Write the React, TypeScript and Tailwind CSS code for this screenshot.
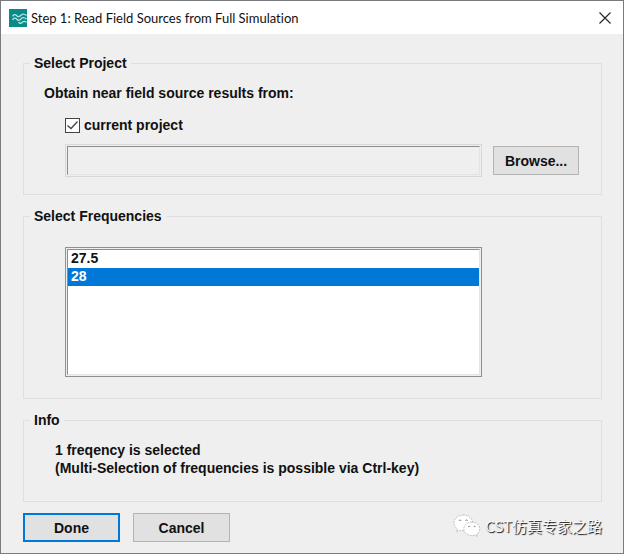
import { useState } from 'react';
import type { ReactNode } from 'react';

const frequencies = ['27.5', '28'];

const AppIcon = () => (
  <svg className="w-[18px] h-[18px] shrink-0" viewBox="0 0 18 18" fill="none" aria-hidden="true">
    <rect width="18" height="18" fill="#098c88" />
    <g stroke="#b9e0de" strokeWidth="1.3">
      <path d="M3.500 7.300c1.300-2.200 2.900-2.200 4.300-.6s2.800 1.200 4.200-.4 3.200-1.700 5.500.2" />
      <path d="M3.500 10.900c1.300-2.200 2.900-2.200 4.300-.6s2.800 1.200 4.200-.4 3.200-1.700 5.500.2" />
      <path d="M9.500 13.300c1.300 1.500 2.600 1.300 3.800 0s2.700-1.400 4.200.1" />
    </g>
  </svg>
);

const ChatIcon = () => (
  <svg className="w-[28px] h-[24px] shrink-0" viewBox="0 0 28 24" aria-hidden="true">
    <g fill="#fff" stroke="#9a9a9a" strokeWidth="0.6" strokeDasharray="2 1">
      <path d="M10.500 1C5.200 1 1 4.500 1 9c0 2.500 1.300 4.700 3.400 6.100l-.9 2.900 3.300-1.700c1.200.3 2.400.5 3.700.5 5.200 0 9.300-3.400 9.300-7.800S15.700 1 10.500 1z" />
      <path d="M18.800 8c-4.400 0-8 3-8 6.800s3.600 6.800 8 6.800c1 0 2-.2 2.900-.5l2.700 1.500-.7-2.400c1.900-1.200 3.100-3.200 3.100-5.400 0-3.800-3.600-6.800-8-6.800z" />
    </g>
    <g fill="none" stroke="#666" strokeWidth="0.9">
      <path d="M6 6.700c.3-1 1.700-1 2 0M12.500 6.700c.3-1 1.700-1 2 0" />
      <path d="M15.200 13c.3-.9 1.500-.9 1.800 0M20.700 13c.3-.9 1.500-.9 1.800 0" />
    </g>
  </svg>
);

const Group = ({ title, className, children }: { title: string; className: string; children: ReactNode }) => (
  <fieldset className="min-w-0 border border-[#dfdfdf]">
    <legend className="ml-[6px] px-1 leading-5">{title}</legend>
    <div className={className}>{children}</div>
  </fieldset>
);

const App = () => {
  const [useCurrent, setUseCurrent] = useState(true);
  const [selected, setSelected] = useState<string[]>(['28']);

  return (
    <div className="flex flex-col min-h-screen border border-[#7b7b7d] bg-[#efefef] text-[#111] text-[14px] leading-[18px] font-bold font-['Liberation_Sans',sans-serif]">
      <header className="flex items-center h-[33px] pl-2 pr-3 gap-1 bg-white font-normal text-[13px] font-['Lato',sans-serif] [font-variant-ligatures:none]">
        <AppIcon />
        <h1 className="flex-1">Step 1: Read Field Sources from Full Simulation</h1>
        <button type="button" aria-label="Close">
          <svg className="w-3 h-3" viewBox="0 0 12 12" fill="none" stroke="#222" strokeWidth="1.100">
            <path d="M.5.5l11 11M11.500.5l-11 11" />
          </svg>
        </button>
      </header>

      <main className="flex flex-col gap-[11px] pl-[22px] pr-[21px] pt-[19px] pb-[11px]">
        <Group title="Select Project" className="pl-5 pr-[22px] pt-[11px] pb-[17px]">
          <p>Obtain near field source results from:</p>
          <div className="mt-[14px] pl-[21px]">
            <label className="flex items-center gap-1 w-fit">
              <span className="grid">
                <input
                  type="checkbox"
                  checked={useCurrent}
                  onChange={e => setUseCurrent(e.target.checked)}
                  className="peer col-start-1 row-start-1 appearance-none w-[15px] h-[15px] border border-[#444] bg-white"
                />
                <svg
                  className="col-start-1 row-start-1 w-[15px] h-[15px] pointer-events-none invisible peer-checked:visible"
                  viewBox="0 0 15 15"
                  fill="none"
                  stroke="#444"
                  strokeWidth="1.300"
                >
                  <path d="M2.500 7.500l3.500 3 6.500-7" />
                </svg>
              </span>
              current project
            </label>
            <div className="mt-[10px] flex items-center gap-[11px]">
              <div className="flex-1 border border-[#d8d8d8] p-px">
                <input
                  type="text"
                  aria-label="Project path"
                  disabled={useCurrent}
                  className="block w-full h-[29px] px-1 border border-t-[#8c8c8c] border-l-[#8c8c8c] border-r-[#e3e3e3] border-b-[#e3e3e3]"
                />
              </div>
              <button type="button" className="w-[86px] h-[29px] border border-[#b4b4b4] bg-[#e1e1e1]">
                Browse...
              </button>
            </div>
          </div>
        </Group>

        <Group title="Select Frequencies" className="pl-[41px] pr-[119px] pt-[21px] pb-[21px]">
          <div className="border border-[#8e9095] bg-[#efefef] p-px">
            <select
              multiple
              aria-label="Frequencies"
              value={selected}
              onChange={e => setSelected(Array.from(e.target.selectedOptions, o => o.value))}
              className="block w-full h-[126px] overflow-hidden bg-white border border-t-[#8c8c8c] border-l-[#8c8c8c] border-r-[#e3e3e3] border-b-[#e3e3e3] outline-none"
            >
              {frequencies.map(f => (
                <option
                  key={f}
                  value={f}
                  className="h-[18px] min-h-[18px] px-[3px] py-0 leading-[18px] font-bold checked:bg-[linear-gradient(#0078d7,#0078d7)] checked:[-webkit-text-fill-color:white]"
                >
                  {f}
                </option>
              ))}
            </select>
          </div>
        </Group>

        <Group title="Info" className="pl-[31px] pr-4 pt-[11px] pb-6">
          <p>{selected.length} freqency is selected</p>
          <p>(Multi-Selection of frequencies is possible via Ctrl-key)</p>
        </Group>

        <footer className="flex items-center gap-[13px]">
          <button type="button" className="w-[97px] h-[29px] border-2 border-[#0078d7] bg-[#e1e1e1]">Done</button>
          <button type="button" className="w-[97px] h-[29px] border border-[#b4b4b4] bg-[#e1e1e1]">Cancel</button>
          <div className="ml-auto flex items-center gap-1 pb-1 text-[15px] leading-4 font-normal text-[#f8f8f8] font-['Noto_Sans_CJK_SC',sans-serif] [text-shadow:1px_1px_1px_#111]">
            <ChatIcon />
            CST仿真专家之路
          </div>
        </footer>
      </main>
    </div>
  );
};

export default App;
